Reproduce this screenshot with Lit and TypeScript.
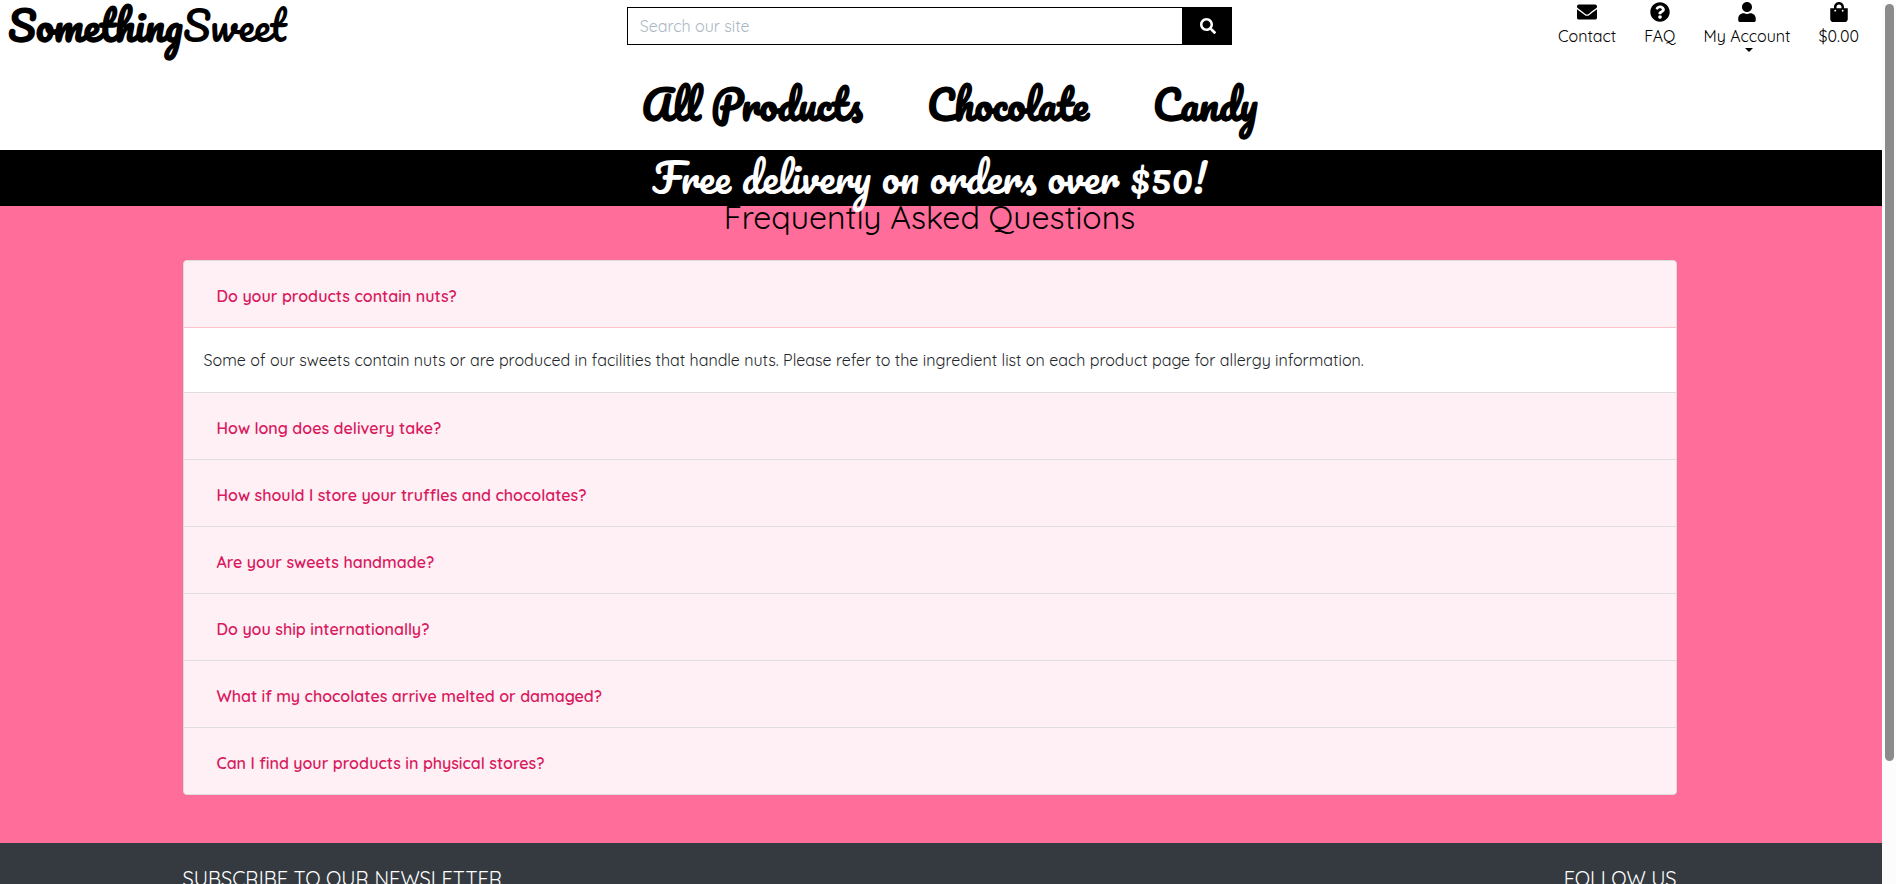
import { LitElement, html, svg, css, nothing } from "lit";
import { customElement, state } from "lit/decorators.js";
import { classMap } from "lit/directives/class-map.js";

const icons = {
  envelope: svg`<path d="M502.3 190.8c3.9-3.1 9.7-.2 9.7 4.7V400c0 26.5-21.5 48-48 48H48c-26.5 0-48-21.5-48-48V195.600c0-5 5.700-7.800 9.700-4.700 22.400 17.400 52.100 39.500 154.100 113.600 21.100 15.400 56.700 47.800 92.200 47.600 35.700.300 72-32.800 92.300-47.600 102-74.100 131.600-96.300 154-113.700zM256 320c23.200.4 56.600-29.200 73.400-41.400 132.700-96.300 142.800-104.700 173.400-128.700 5.800-4.500 9.200-11.500 9.200-18.900v-19c0-26.500-21.500-48-48-48H48c-26.500 0-48 21.500-48 48v19c0 7.400 3.400 14.300 9.200 18.900 30.600 23.900 40.700 32.400 173.400 128.700 16.800 12.200 50.200 41.800 73.400 41.400z"/>`,
  question: svg`<path d="M504 256c0 137-111 248-248 248S8 393 8 256C8 119 119 8 256 8s248 111 248 248zM262.700 90c-54.500 0-89.300 23-116.500 63.800-3.500 5.300-2.400 12.400 2.700 16.300l34.700 26.300c5.200 3.900 12.600 3 16.700-2.100 17.900-22.700 30.100-35.800 57.300-35.800 20.400 0 45.700 13.100 45.700 33 0 15-12.400 22.700-32.500 34C247.100 238.500 216 254.900 216 296v4c0 6.600 5.400 12 12 12h56c6.600 0 12-5.400 12-12v-1.300c0-28.500 83.200-29.600 83.200-106.700 0-58-60.200-102-116.500-102zM256 338c-25.400 0-46 20.600-46 46s20.600 46 46 46 46-20.600 46-46-20.600-46-46-46z"/>`,
  user: svg`<path transform="translate(32 0)" d="M224 256c70.700 0 128-57.300 128-128S294.700 0 224 0 96 57.300 96 128s57.300 128 128 128zm89.600 32h-16.700c-22.200 10.200-46.900 16-72.900 16s-50.600-5.800-72.900-16h-16.700C60.200 288 0 348.200 0 422.400V464c0 26.500 21.500 48 48 48h352c26.500 0 48-21.500 48-48v-41.600c0-74.200-60.200-134.400-134.400-134.400z"/>`,
  bag: svg`<path transform="translate(32 0)" d="M352 160v-32C352 57.400 294.600 0 224 0S96 57.400 96 128v32H0v272c0 44.200 35.800 80 80 80h288c44.200 0 80-35.800 80-80V160h-96zm-192-32c0-35.300 28.700-64 64-64s64 28.700 64 64v32H160v-32zm160 120c-13.300 0-24-10.700-24-24s10.700-24 24-24 24 10.700 24 24-10.700 24-24 24zm-192 0c-13.300 0-24-10.700-24-24s10.700-24 24-24 24 10.700 24 24-10.700 24-24 24z"/>`,
  search: svg`<path d="M505 442.700L405.300 343c-4.500-4.500-10.600-7-17-7H372c27.600-35.300 44-79.700 44-128C416 93.100 322.900 0 208 0S0 93.100 0 208s93.100 208 208 208c48.300 0 92.700-16.400 128-44v16.300c0 6.400 2.500 12.500 7 17l99.700 99.700c9.400 9.400 24.600 9.400 33.900 0l28.300-28.300c9.400-9.400 9.400-24.600.1-34zM208 336c-70.700 0-128-57.200-128-128 0-70.700 57.200-128 128-128 70.700 0 128 57.200 128 128 0 70.700-57.200 128-128 128z"/>`,
};

const icon = (name: keyof typeof icons) =>
  html`<svg class="icon" viewBox="0 0 512 512" aria-hidden="true">${icons[name]}</svg>`;

interface Entry {
  question: string;
  answer: string;
}

const entries: Entry[] = [
  {
    question: "Do your products contain nuts?",
    answer:
      "Some of our sweets contain nuts or are produced in facilities that handle nuts. Please refer to the ingredient list on each product page for allergy information.",
  },
  { question: "How long does delivery take?", answer: "" },
  { question: "How should I store your truffles and chocolates?", answer: "" },
  { question: "Are your sweets handmade?", answer: "" },
  { question: "Do you ship internationally?", answer: "" },
  { question: "What if my chocolates arrive melted or damaged?", answer: "" },
  { question: "Can I find your products in physical stores?", answer: "" },
];

@customElement("sweet-header")
export class SweetHeader extends LitElement {
  static styles = css`
    :host {
      display: block;
      background: #fff;
      padding-right: 23px;
    }
    * {
      box-sizing: border-box;
    }
    a {
      color: #000;
      text-decoration: none;
    }
    .top {
      display: grid;
      grid-template-columns: repeat(3, 1fr);
      align-items: start;
      height: 64px;
    }
    .brand {
      padding-left: 8px;
      font: 400 40px/50px Pacifico, Lato, sans-serif;
    }
    .brand strong {
      font-weight: 700;
    }
    .search {
      display: flex;
      height: 38px;
      margin: 7px 7px 0;
    }
    .search input {
      flex: 1;
      min-width: 0;
      border: 1px solid #000;
      border-radius: 0;
      padding: 0 12px;
      background: #fff;
      font: inherit;
      color: #000;
    }
    .search input::placeholder {
      color: #aab7c4;
      opacity: 1;
    }
    .search button {
      width: 49px;
      border: 0;
      padding: 0;
      background: #000;
      display: grid;
      place-items: center;
    }
    .icon {
      display: block;
      width: 20px;
      height: 20px;
      fill: currentColor;
    }
    .search .icon {
      width: 16px;
      height: 16px;
      fill: #fff;
    }
    .links {
      display: flex;
      justify-content: flex-end;
      gap: 28px;
      margin: 0;
      padding: 2px 0 0;
      list-style: none;
    }
    .links a {
      display: flex;
      flex-direction: column;
      align-items: center;
      line-height: 24px;
    }
    .links .label {
      padding-top: 2px;
    }
    .caret {
      margin-left: 4px;
      border: 4px solid transparent;
      border-top-color: #000;
      border-bottom: 0;
    }
    .nav {
      display: flex;
      justify-content: center;
      gap: 64px;
      margin: 0;
      padding: 0 0 0 40px;
      height: 86px;
      list-style: none;
      font: 700 40px/80px Pacifico, Lato, sans-serif;
    }
  `;
  render() {
    return html`
      <div class="top">
        <a class="brand" href="#"><strong>Something</strong>Sweet</a>
        <form class="search" role="search" @submit=${(e: Event) => e.preventDefault()}>
          <input type="text" aria-label="Search our site" placeholder="Search our site" />
          <button type="submit" aria-label="Search">${icon("search")}</button>
        </form>
        <ul class="links">
          <li><a href="#">${icon("envelope")}<span class="label">Contact</span></a></li>
          <li><a href="#">${icon("question")}<span class="label">FAQ</span></a></li>
          <li>
            <a href="#">${icon("user")}<span class="label">My Account</span><span class="caret"></span></a>
          </li>
          <li><a href="#">${icon("bag")}<span class="label">$0.00</span></a></li>
        </ul>
      </div>
      <nav>
        <ul class="nav">
          <li><a href="#">All Products</a></li>
          <li><a href="#">Chocolate</a></li>
          <li><a href="#">Candy</a></li>
        </ul>
      </nav>
    `;
  }
}

@customElement("faq-list")
export class FaqList extends LitElement {
  static styles = css`
    :host {
      display: block;
      border: 1px solid #dcdcdc;
      border-radius: 4px;
      overflow: hidden;
      background: #fff;
    }
    * {
      box-sizing: border-box;
    }
    .item + .item {
      border-top: 1px solid #dedede;
    }
    h2 {
      margin: 0;
      font: inherit;
    }
    button {
      display: block;
      width: 100%;
      border: 0;
      padding: 23px 33px 19px;
      background: #fff0f5;
      color: #d81b60;
      font: 600 16px/24px Quicksand, "Open Sans", sans-serif;
      text-align: left;
      cursor: pointer;
    }
    .open button {
      border-bottom: 1px solid #ffc0cb;
    }
    .answer {
      margin: 0;
      padding: 20px;
      color: #212529;
    }
  `;
  @state() private openIndex = 0;

  render() {
    return entries.map(
      (entry, i) => html`
        <div class=${classMap({ item: true, open: i === this.openIndex })}>
          <h2>
            <button aria-expanded=${i === this.openIndex} @click=${() => (this.openIndex = i)}>
              ${entry.question}
            </button>
          </h2>
          ${i === this.openIndex && entry.answer ? html`<p class="answer">${entry.answer}</p>` : nothing}
        </div>
      `
    );
  }
}

@customElement("app-root")
export class AppRoot extends LitElement {
  static styles = css`
    :host {
      display: flex;
      height: 100vh;
      overflow: hidden;
      background: #fcfcfc;
      color: #000;
      font: 400 16px/24px Quicksand, "Open Sans", sans-serif;
    }
    * {
      box-sizing: border-box;
    }
    .page {
      flex: 1;
      min-width: 0;
      overflow-y: auto;
      scrollbar-width: none;
      background: #ff6e9a;
    }
    .rail {
      width: 14px;
      padding: 4px 2px 0 3px;
    }
    .thumb {
      height: 86%;
      border-radius: 5px;
      background: #8b8b8b;
    }
    .banner {
      position: relative;
      height: 56px;
      padding-right: 23px;
      background: #000;
      color: #fff;
      font: 400 40px/54px Pacifico, Lato, sans-serif;
      text-align: center;
    }
    .banner p {
      margin: 0;
    }
    main {
      padding: 0 23px 48px 0;
    }
    h1 {
      margin: 0;
      padding-bottom: 32px;
      font: 400 32px/22px Quicksand, "Open Sans", sans-serif;
      text-align: center;
    }
    .container {
      width: 1494px;
      max-width: calc(100% - 32px);
      margin: 0 auto;
    }
    footer {
      padding: 24px 23px 40px 0;
      background: #343a40;
      color: #fff;
    }
    .columns {
      display: flex;
      justify-content: space-between;
    }
    h3 {
      margin: 0;
      font: 400 20px/24px Quicksand, "Open Sans", sans-serif;
      text-transform: uppercase;
    }
  `;
  render() {
    return html`
      <div class="page">
        <sweet-header></sweet-header>
        <div class="banner"><p>Free delivery on orders over $50!</p></div>
        <main>
          <h1>Frequently Asked Questions</h1>
          <faq-list class="container"></faq-list>
        </main>
        <footer>
          <div class="container columns">
            <h3>Subscribe to our newsletter</h3>
            <h3>Follow us</h3>
          </div>
        </footer>
      </div>
      <div class="rail" aria-hidden="true"><div class="thumb"></div></div>
    `;
  }
}
